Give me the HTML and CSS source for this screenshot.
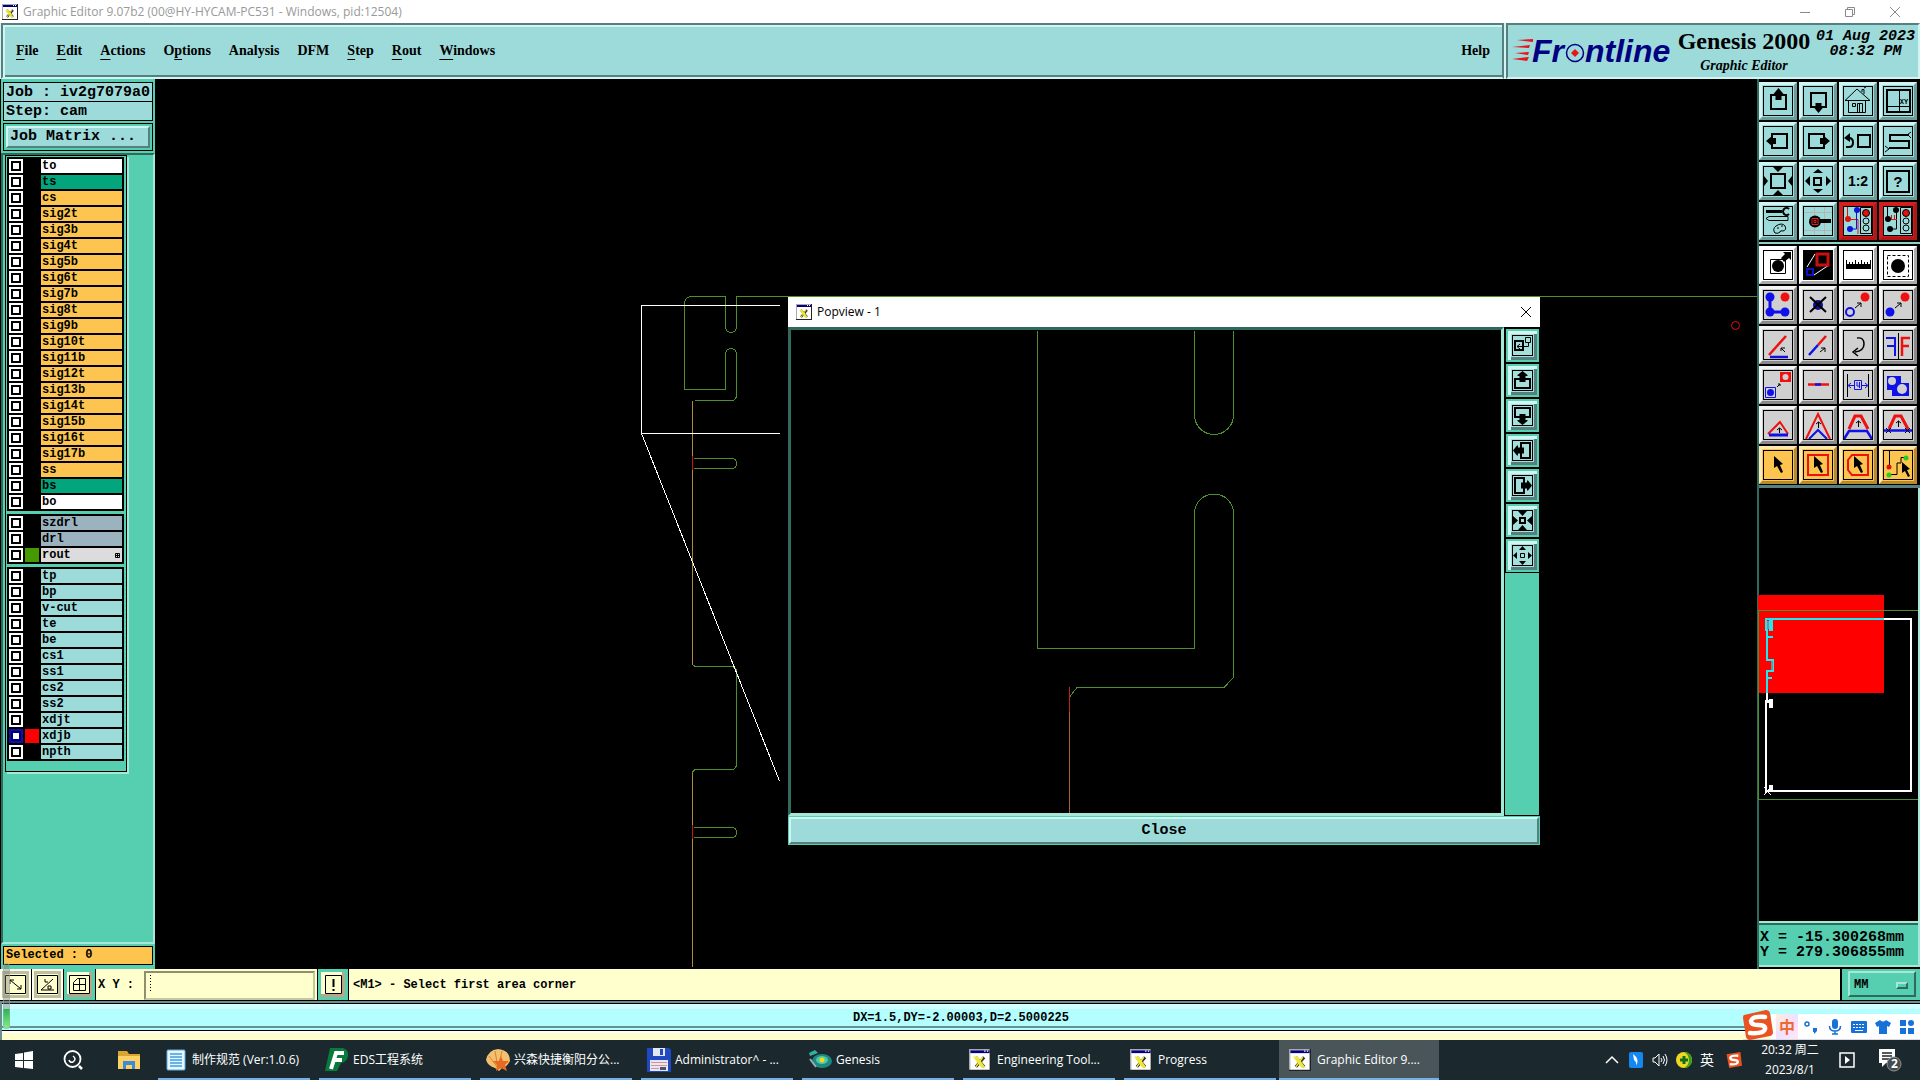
FILE: index.html
```html
<!DOCTYPE html>
<html lang="en">
<head>
<meta charset="utf-8">
<title>Graphic Editor 9.07b2</title>
<link rel="stylesheet" href="styles.css">
</head>
<body>
<svg class="defs" aria-hidden="true">
  <symbol id="i-app" viewBox="0 0 16 16"><path fill="#fff" d="M0 0h16v16H0z"/><path fill="#aaa" d="M0 0h1v16H0zM0 0h16v1H0z"/><path fill="#222" d="M15 0h1v16H0v-1h15z"/><path fill="#000080" d="M1 1h14v2H1z"/><path fill="#fff" d="M11 1h1v1h-1zM13 1h1v1h-1z"/><path d="M5 6l6 7M11 6l-6 7" stroke="#333" stroke-width="2.2"/><path d="M4 6h2l5 7h-2zM10 6l-5 7" stroke="#f0e832" stroke-width="1" fill="#f0e832"/></symbol>
  <symbol id="i-up" viewBox="0 0 30 30"><path class="l2" d="M8 9h15v14H8z"/><path d="M15.500 2l5 6h-2v6h-6V8h-2z"/></symbol>
  <symbol id="i-down" viewBox="0 0 30 30"><path class="l2" d="M8 7h15v14H8z"/><path d="M15.500 27l5-6h-2v-4h-6v4h-2z"/></symbol>
  <symbol id="i-left" viewBox="0 0 30 30"><path class="l2" d="M9 8h15v14H9z"/><path d="M3 15l6-5v2h4v6H9v2z"/></symbol>
  <symbol id="i-right" viewBox="0 0 30 30"><path class="l2" d="M6 8h15v14H6z"/><path d="M27 15l-6-5v2h-4v6h4v2z"/></symbol>
  <symbol id="p-up" viewBox="0 0 21 21"><path class="l2" d="M3 9h15v9H3z"/><path d="M10.500 1l5 4v1h-2v6h-6V6h-2V5z"/></symbol>
  <symbol id="p-down" viewBox="0 0 21 21"><path class="l2" d="M3 3h15v9H3z"/><path d="M10.500 20l5-4v-1h-2V9h-6v6h-2v1z"/></symbol>
  <symbol id="p-left" viewBox="0 0 21 21"><path class="l2" d="M9 3h9v15H9z"/><path d="M1 10.500l4-5h1v2h6v6H6v2H5z"/></symbol>
  <symbol id="p-right" viewBox="0 0 21 21"><path class="l2" d="M3 3h9v15H3z"/><path d="M20 10.500l-4-5h-1v2H9v6h6v2h1z"/></symbol>
  <symbol id="p-in" viewBox="0 0 21 21"><path class="l2" d="M8 8h5v5H8z"/><path d="M6 1h9l-4.500 5zM6 20h9l-4.500-5zM1 6v9l5-4.500zM20 6v9l-5-4.500z"/></symbol>
  <symbol id="p-out" viewBox="0 0 21 21"><path class="l1" d="M8.500 8.500h4v4h-4z"/><path d="M7 5h7l-3.500-4zM7 16h7l-3.500 4zM5 7v7l-4-3.500zM16 7v7l4-3.500z"/></symbol>
  <symbol id="i-in" viewBox="0 0 30 30"><path class="l2" d="M8 8h14v14H8z"/><path d="M10 1h10l-5 5zM10 29h10l-5-5zM1 10v10l4-5zM29 10v10l-4-5z"/></symbol>
  <symbol id="i-out" viewBox="0 0 30 30"><path class="l2" d="M11 12h7v7h-7z"/><path d="M10 7h10l-5-4zM10 23h10l-5 4zM7 10v10l-5-5zM23 10v10l5-5z"/></symbol>
</svg>

<header class="titlebar">
  <svg class="app-icon"><use href="#i-app"/></svg>
  <span class="title-text">Graphic Editor 9.07b2 (00@HY-HYCAM-PC531 - Windows, pid:12504)</span>
  <button class="win-btn" aria-label="Minimize"><svg viewBox="0 0 12 12"><path d="M1 6.500h10"/></svg></button>
  <button class="win-btn" aria-label="Restore"><svg viewBox="0 0 12 12"><path d="M1.500 3.500h7v7h-7zM3.500 3V1.500h7v7H9"/></svg></button>
  <button class="win-btn" aria-label="Close window"><svg viewBox="0 0 12 12"><path d="M1 1l10 10M11 1L1 11"/></svg></button>
</header>

<div class="topbar">
  <nav class="menu">
    <button><u>F</u>ile</button><button><u>E</u>dit</button><button><u>A</u>ctions</button><button>O<u>p</u>tions</button><button>Analysis</button><button>DFM</button><button><u>S</u>tep</button><button><u>R</u>out</button><button><u>W</u>indows</button>
    <button class="help">Help</button>
  </nav>
  <div class="brand">
    <svg class="logo" viewBox="0 0 160 40" role="img" aria-label="Frontline">
      <path fill="#e8141c" d="M5 9l16-1v3zM0 16l18-2-1 3zM3 22l14-1-1 3zM0 28l17-2-2 4z"/>
      <g class="logo-text"><text x="20" y="31">Fr</text><text x="73" y="31">ntline</text></g>
      <circle cx="63" cy="22" r="8.500" fill="none" stroke="#000080" stroke-width="1.500"/><path fill="#e8141c" d="M63 18l4 4-4 4-4-4z"/>
    </svg>
    <div class="product"><strong>Genesis 2000</strong><em>Graphic Editor</em></div>
    <div class="date">01 Aug 2023<br>08:32 PM</div>
  </div>
</div>

<main class="work">
  <aside class="side">
    <div class="job">Job : iv2g7079a0</div>
    <div class="job step">Step: cam</div>
    <div class="matrix"><button>Job Matrix ...</button></div>
    <div class="layers-pane">
      <div class="layers">
        <ul>
          <li><input type="checkbox" id="l1"><i></i><label for="l1" class="white">to</label></li>
          <li><input type="checkbox" id="l2"><i></i><label for="l2" class="green">ts</label></li>
          <li><input type="checkbox" id="l3"><i></i><label for="l3" class="gold">cs</label></li>
          <li><input type="checkbox" id="l4"><i></i><label for="l4" class="gold">sig2t</label></li>
          <li><input type="checkbox" id="l5"><i></i><label for="l5" class="gold">sig3b</label></li>
          <li><input type="checkbox" id="l6"><i></i><label for="l6" class="gold">sig4t</label></li>
          <li><input type="checkbox" id="l7"><i></i><label for="l7" class="gold">sig5b</label></li>
          <li><input type="checkbox" id="l8"><i></i><label for="l8" class="gold">sig6t</label></li>
          <li><input type="checkbox" id="l9"><i></i><label for="l9" class="gold">sig7b</label></li>
          <li><input type="checkbox" id="l10"><i></i><label for="l10" class="gold">sig8t</label></li>
          <li><input type="checkbox" id="l11"><i></i><label for="l11" class="gold">sig9b</label></li>
          <li><input type="checkbox" id="l12"><i></i><label for="l12" class="gold">sig10t</label></li>
          <li><input type="checkbox" id="l13"><i></i><label for="l13" class="gold">sig11b</label></li>
          <li><input type="checkbox" id="l14"><i></i><label for="l14" class="gold">sig12t</label></li>
          <li><input type="checkbox" id="l15"><i></i><label for="l15" class="gold">sig13b</label></li>
          <li><input type="checkbox" id="l16"><i></i><label for="l16" class="gold">sig14t</label></li>
          <li><input type="checkbox" id="l17"><i></i><label for="l17" class="gold">sig15b</label></li>
          <li><input type="checkbox" id="l18"><i></i><label for="l18" class="gold">sig16t</label></li>
          <li><input type="checkbox" id="l19"><i></i><label for="l19" class="gold">sig17b</label></li>
          <li><input type="checkbox" id="l20"><i></i><label for="l20" class="gold">ss</label></li>
          <li><input type="checkbox" id="l21"><i></i><label for="l21" class="green">bs</label></li>
          <li><input type="checkbox" id="l22"><i></i><label for="l22" class="white">bo</label></li>
        </ul>
        <ul>
          <li><input type="checkbox" id="l23"><i></i><label for="l23" class="steel">szdrl</label></li>
          <li><input type="checkbox" id="l24"><i></i><label for="l24" class="steel">drl</label></li>
          <li><input type="checkbox" id="l25"><i class="c-rout"></i><label for="l25" class="grey">rout<svg viewBox="0 0 5 5"><path d="M.5.5h4v4h-4zM2.500 0v5M0 2.500h5"/></svg></label></li>
        </ul>
        <ul>
          <li><input type="checkbox" id="l26"><i></i><label for="l26">tp</label></li>
          <li><input type="checkbox" id="l27"><i></i><label for="l27">bp</label></li>
          <li><input type="checkbox" id="l28"><i></i><label for="l28">v-cut</label></li>
          <li><input type="checkbox" id="l29"><i></i><label for="l29">te</label></li>
          <li><input type="checkbox" id="l30"><i></i><label for="l30">be</label></li>
          <li><input type="checkbox" id="l31"><i></i><label for="l31">cs1</label></li>
          <li><input type="checkbox" id="l32"><i></i><label for="l32">ss1</label></li>
          <li><input type="checkbox" id="l33"><i></i><label for="l33">cs2</label></li>
          <li><input type="checkbox" id="l34"><i></i><label for="l34">ss2</label></li>
          <li><input type="checkbox" id="l35"><i></i><label for="l35">xdjt</label></li>
          <li><input type="checkbox" id="l36" checked><i class="c-xdjb"></i><label for="l36">xdjb</label></li>
          <li><input type="checkbox" id="l37"><i></i><label for="l37">npth</label></li>
        </ul>
      </div>
    </div>
    <div class="selected">Selected : 0</div>
  </aside>

  <section class="canvas">
    <svg class="drawing">
      <g transform="translate(-155 -79)" fill="none" shape-rendering="crispEdges">
        <g stroke="#4f8f2c">
          <path d="M1757 296.500H736.500V327a5 5 0 0 1-11 0V296.500H691a7 7 0 0 0-6.500 8V389.500H725.500V354a5 5 0 0 1 11 0V397l-3 3.500H695"/>
          <path d="M694 458.500H732a5 5 0 0 1 0 10H694M692 664l3 2.500H733l3.500 3V766l-3 3.500H695l-3 3M694 827.500H732a5 5 0 0 1 0 10H694"/>
        </g>
        <path stroke="#b08a3c" d="M692.500 401V665M692.500 773V967"/>
        <path stroke="#c81414" d="M692.500 456V470M692.500 825V839"/>
        <path stroke="#fff" d="M780 305.500H641.500V433.500H780M641.500 433.500L779.500 781"/>
        <circle cx="1735.500" cy="325.500" r="4" stroke="#e01010" shape-rendering="auto"/>
      </g>
    </svg>

    <div class="popup" role="dialog" aria-label="Popview - 1">
      <div class="popup-title"><svg class="app-icon"><use href="#i-app"/></svg><span>Popview - 1</span>
        <button aria-label="Close popup"><svg viewBox="0 0 12 12"><path d="M1 1l10 10M11 1L1 11"/></svg></button></div>
      <div class="popup-body">
        <div class="popview">
          <svg class="drawing"><g transform="translate(-791 -330)" fill="none" shape-rendering="crispEdges">
            <path stroke="#4f8f2c" d="M1037.500 331V648.500H1194.500V513.500a19 19 0 0 1 39 0V677.500L1224 687.500H1077L1069.500 697M1194.500 331V415a19 19 0 0 0 39 0V331"/>
            <path stroke="#a8603a" d="M1069.500 697V813"/><path stroke="#c02020" d="M1069.500 687V712"/></g></svg>
        </div>
        <div class="pop-tools">
          <button class="ptool" aria-label="Popup window"><svg viewBox="0 0 21 21"><path class="l2" d="M3 6h8v9H3z"/><path class="l1" d="M13.500 2.500h5v5h-5zM16.500 8v3.500H5M8 9l-3 2.500L8 14"/></svg></button>
          <button class="ptool" aria-label="Pan up"><svg><use href="#p-up"/></svg></button>
          <button class="ptool" aria-label="Pan down"><svg><use href="#p-down"/></svg></button>
          <button class="ptool" aria-label="Pan left"><svg><use href="#p-left"/></svg></button>
          <button class="ptool" aria-label="Pan right"><svg><use href="#p-right"/></svg></button>
          <button class="ptool" aria-label="Zoom in"><svg><use href="#p-in"/></svg></button>
          <button class="ptool" aria-label="Zoom out"><svg><use href="#p-out"/></svg></button>
        </div>
      </div>
      <button class="popup-close">Close</button>
    </div>
  </section>

  <aside class="right">
    <div class="tools">
      <button class="tool" aria-label="Pan up"><svg><use href="#i-up"/></svg></button>
      <button class="tool" aria-label="Pan down"><svg><use href="#i-down"/></svg></button>
      <button class="tool" aria-label="Home"><svg viewBox="0 0 30 30"><path class="l1" d="M2 14.500L14 3l13 11.500zM5.500 15v11.500h17V15M9.500 17.500h3v3h-3zM14.500 26V17.500h5V26M16.500 18v8M19 6V3.500h2V8M21 2l2-1"/></svg></button>
      <button class="tool" aria-label="Zoom X Y"><svg viewBox="0 0 30 30"><path class="l2" d="M4 4h23v22H4z"/><path class="l1" d="M4 20.500h23M16.500 4v22"/><text class="tiny" x="21" y="18">XY</text></svg></button>
      <button class="tool" aria-label="Pan left"><svg><use href="#i-left"/></svg></button>
      <button class="tool" aria-label="Pan right"><svg><use href="#i-right"/></svg></button>
      <button class="tool" aria-label="Previous view"><svg viewBox="0 0 30 30"><path class="l2" d="M15 9h12v12H15zM3 21h3q4 0 4-4.500T6 12H5"/><path d="M1 12l6-5v9z"/></svg></button>
      <button class="tool" aria-label="Snake"><svg viewBox="0 0 30 30"><path class="l2" d="M26 9H7v6h19v7H6"/><path class="l1" d="M24 9l4-3M25 9l3 3M2 20l4 3-4 3"/></svg></button>
      <button class="tool" aria-label="Zoom in"><svg><use href="#i-in"/></svg></button>
      <button class="tool" aria-label="Zoom out"><svg><use href="#i-out"/></svg></button>
      <button class="tool" aria-label="Scale one to two"><svg viewBox="0 0 30 30"><text class="ratio" x="15" y="20">1:2</text></svg></button>
      <button class="tool" aria-label="Query"><svg viewBox="0 0 30 30"><path class="l2" d="M4 5h22v21H4z"/><text x="15" y="21">?</text></svg></button>
      <button class="tool" aria-label="Settings"><svg viewBox="0 0 30 30"><path d="M3 4h16v3H3z"/><path class="l2" d="M26 3a3.500 3.500 0 1 0 0 5"/><path class="l1" d="M3 12.500l3-2h19v4H6zM12 27q-3-4 1-7 6-4 9 0 2 4-2 5-3-1-3 1-2 2-5 1zM14 22h2M18 20h2"/></svg></button>
      <button class="tool" aria-label="Snap"><svg viewBox="0 0 30 30"><path stroke="#b9b3b3" d="M11.500 1v28M21.500 1v28M1 6.500h28M1 24.500h28"/><path stroke="#000" d="M17 15h11" stroke-width="4"/><circle cx="12" cy="15.500" r="6"/><path stroke="#e02020" fill="none" d="M9 12.500h6v6H9zM11 14.500h2v2h-2z"/></svg></button>
      <button class="tool red" aria-label="Net colour"><svg viewBox="0 0 30 30"><path stroke="#e01010" fill="none" d="M4.500 1v12M5 13.500h10V28"/><path stroke="#1010e0" fill="none" d="M13.500 4v10M8 23h5.500V14"/><circle cx="5" cy="13" r="3" fill="#e01010"/><circle cx="14" cy="4" r="3" fill="#1010e0"/><circle cx="7" cy="23" r="3" fill="#1010e0"/><path class="l1" d="M17.500 1.500h11v26h-11z"/><circle cx="23" cy="7" r="3.500" fill="#e01010" stroke="#000"/><circle class="l1" cx="23" cy="15" r="3"/><circle class="l1" cx="23" cy="22" r="3"/></svg></button>
      <button class="tool red" aria-label="Net state"><svg viewBox="0 0 30 30"><path class="l1" d="M4.500 1v12M13.500 4v10M8 23h5.500V14"/><path stroke="#e01010" fill="none" d="M6 13.500h8M8.500 9v4M11.500 9v4"/><circle cx="5" cy="13" r="3"/><circle cx="13" cy="4" r="3"/><circle cx="7" cy="23" r="3"/><path class="l1" d="M17.500 1.500h11v26h-11z"/><circle cx="23" cy="7" r="3.500" fill="#e01010" stroke="#000"/><circle class="l1" cx="23" cy="15" r="3"/><circle class="l1" cx="23" cy="22" r="3"/></svg></button>
    </div>
    <div class="tools second">
      <button class="tool white" aria-label="Select feature"><svg viewBox="0 0 30 30"><path class="l1" d="M7.500 9.500h15v14h-15z"/><circle cx="15" cy="16" r="6"/><path d="M18 8l4-4-2-2h8v8l-2-2-5 4z"/></svg></button>
      <button class="tool white" aria-label="Popview"><svg viewBox="0 0 30 30"><path d="M1 1h28v28H1z"/><path stroke="#fff" d="M12 4L4 17M26 15L11 25"/><path stroke="#c81010" stroke-width="3" d="M14 4h11v11H14z" /><path stroke="#1010c8" stroke-width="2" d="M4 19h6v6H4z"/></svg></button>
      <button class="tool white" aria-label="Measure"><svg viewBox="0 0 30 30"><path d="M3 14h25v5H3zM3 10h1v5H3zM6 12h1v3H6zM9 12h1v3H9zM12 10h1v5h-1zM15 12h1v3h-1zM18 10h1v5h-1zM21 12h1v3h-1zM24 12h1v3h-1zM27 10h1v5h-1z"/></svg></button>
      <button class="tool white" aria-label="Area"><svg viewBox="0 0 30 30"><path class="l1" stroke-dasharray="3 2" d="M4.500 5.500h21v21h-21z"/><circle cx="15" cy="16" r="7"/></svg></button>
      <button class="tool grey" aria-label="Chain"><svg viewBox="0 0 30 30"><path stroke="#1010e8" stroke-width="3" fill="none" d="M7 7v15h15"/><g fill="#1010e8"><circle cx="7" cy="7" r="4.500"/><circle cx="7" cy="22" r="4.500"/><circle cx="22" cy="22" r="4.500"/></g><circle cx="22" cy="7" r="4.500" fill="#f01010"/></svg></button>
      <button class="tool grey" aria-label="Delete"><svg viewBox="0 0 30 30"><circle cx="15" cy="15" r="5" fill="#101090"/><path class="l2" d="M7 7l16 15M23 7L7 22"/></svg></button>
      <button class="tool grey" aria-label="Move"><svg viewBox="0 0 30 30"><circle cx="7" cy="22" r="4" fill="none" stroke="#1010e8" stroke-width="2"/><circle cx="22" cy="7" r="4.500" fill="#f01010"/><path class="l1" d="M12 18l6-5M14 13h4v4"/></svg></button>
      <button class="tool grey" aria-label="Copy"><svg viewBox="0 0 30 30"><circle cx="7" cy="22" r="4.500" fill="#1010e8"/><circle cx="22" cy="7" r="4.500" fill="#f01010"/><path class="l1" d="M12 18l6-5M14 13h4v4"/></svg></button>
      <button class="tool grey" aria-label="Angle"><svg viewBox="0 0 30 30"><path stroke="#f01010" stroke-width="2.500" d="M6 25L23 6"/><path stroke="#1010e8" stroke-width="2.500" d="M7 27h18"/><path class="l1" d="M22 22l-4-4M18 21v-3h4"/></svg></button>
      <button class="tool grey" aria-label="Line"><svg viewBox="0 0 30 30"><path stroke="#f01010" stroke-width="2.500" d="M15 15l8-9"/><path stroke="#1010e8" stroke-width="2.500" d="M6 25l9-10"/><path class="l1" d="M17 22l5-4M18 18h4v4"/></svg></button>
      <button class="tool grey" aria-label="Rotate"><svg viewBox="0 0 30 30"><path fill="none" stroke="#000" stroke-width="1.500" d="M14 8q7-1 7 6t-9 8M15 18l-5 4 5 4"/></svg></button>
      <button class="tool grey" aria-label="Mirror"><svg viewBox="0 0 30 30"><path stroke="#1010e8" stroke-width="2" fill="none" d="M3 8h9v18M4 16h8"/><path stroke="#f01010" stroke-width="2.500" fill="none" d="M27 8h-8v18M26 16h-7"/><path class="l1" d="M15.500 3v26"/></svg></button>
      <button class="tool grey" aria-label="Swap"><svg viewBox="0 0 30 30"><path fill="#f01010" d="M17 2h11v10H17z"/><circle cx="22.500" cy="7" r="3" fill="#d0d0d0"/><path fill="none" stroke="#1010e8" d="M2.500 17.500h10v10h-10z"/><circle cx="7.500" cy="22.500" r="3.500" fill="#1010e8"/><path class="l1" d="M14 17l3-3M15 14h2v2"/></svg></button>
      <button class="tool grey" aria-label="Trim"><svg viewBox="0 0 30 30"><path stroke="#f01010" stroke-width="2.500" d="M5 14.500h21"/><path stroke="#1010e8" stroke-width="2.500" d="M12 14.500h6"/></svg></button>
      <button class="tool grey" aria-label="Spacing"><svg viewBox="0 0 30 30"><path class="l1" d="M4.500 4v23M25.500 4v23"/><path fill="none" stroke="#1010e8" d="M11.500 10.500h7v9h-7zM11 15.500H6M8 13l-3 2.500L8 18M19 15.500h5M22 13l3 2.500-3 2.500M14 12v4h3M16.500 12v6"/></svg></button>
      <button class="tool grey" aria-label="Cut out"><svg viewBox="0 0 30 30"><path fill="#1010e8" d="M4 6h14v7h8v13H9v-6H4z"/><circle cx="9" cy="11" r="4" fill="#d0d0d0"/><circle cx="19" cy="19" r="5" fill="#d0d0d0"/></svg></button>
      <button class="tool grey" aria-label="Triangle"><svg viewBox="0 0 30 30"><path fill="none" stroke="#f01010" stroke-width="2" d="M5 24L17 12l8 12"/><path stroke="#1010e8" stroke-width="3" d="M6 25h19"/><path class="l1" d="M16.500 23v-5M14 20l2.500-2 2.500 2"/></svg></button>
      <button class="tool grey" aria-label="Peak"><svg viewBox="0 0 30 30"><path fill="none" stroke="#f01010" stroke-width="2" d="M3 29L15 4l12 25"/><path fill="none" stroke="#1010e8" stroke-width="2" d="M6 29l9-9 9 9"/><path class="l1" d="M15.500 18v-6M13 14l2.500-2 2.500 2"/></svg></button>
      <button class="tool grey" aria-label="Trapezoid"><svg viewBox="0 0 30 30"><path fill="none" stroke="#f01010" stroke-width="3" d="M6 19l6-13h6l7 13"/><path fill="none" stroke="#1010e8" stroke-width="2.500" d="M1 29l5-8h18l5 8"/><path class="l1" d="M15.500 17v-6M13 13l2.500-2 2.500 2"/></svg></button>
      <button class="tool grey" aria-label="Trim trapezoid"><svg viewBox="0 0 30 30"><path fill="none" stroke="#f01010" stroke-width="3" d="M6 19l6-13h6l7 13"/><path stroke="#1010e8" stroke-width="2.500" d="M1 20.500h28"/><path class="l1" d="M15.500 17v-6M13 13l2.500-2 2.500 2M3 18l5 5M8 18l-5 5M22 18l5 5M27 18l-5 5"/></svg></button>
      <button class="tool gold" aria-label="Pick"><svg viewBox="0 0 30 30"><path d="M11 6l9 8-3 1 3 7-2 1-4-7-3 2z"/></svg></button>
      <button class="tool gold" aria-label="Pick in frame"><svg viewBox="0 0 30 30"><path fill="none" stroke="#f01010" stroke-width="2" d="M5 5h20v20H5z"/><path d="M11 6l9 8-3 1 3 7-2 1-4-7-3 2z"/></svg></button>
      <button class="tool gold" aria-label="Pick in polygon"><svg viewBox="0 0 30 30"><path fill="none" stroke="#f01010" stroke-width="2" d="M9 5h16v20H9l-4-5V10z"/><path d="M11 6l9 8-3 1 3 7-2 1-4-7-3 2z"/></svg></button>
      <button class="tool gold" aria-label="Pick net"><svg viewBox="0 0 30 30"><path class="l1" d="M6.500 1v16M6 24.500h8V13h4V7.500h6"/><circle cx="6" cy="17" r="2.500" fill="#e01010"/><circle cx="6" cy="25" r="2.500" fill="#20d020"/><circle cx="23" cy="8" r="2.500" fill="#20d020"/><path d="M19 12l8 7-3 1 3 6-2 1-3-6-3 2z"/></svg></button>
    </div>
    <div class="minimap">
      <svg class="drawing"><g transform="translate(-1757 -488)" fill="none" shape-rendering="crispEdges">
        <path fill="#f00" d="M1758 595h126v98h-126z"/>
        <path stroke="#4f8f2c" d="M1919 610.500H1758.500V799.500H1919"/>
        <path stroke="#fff" stroke-width="2" d="M1883 619h28v172h-145V701h1V692"/>
        <path stroke="#20e8f0" stroke-width="2" d="M1884 619H1766V630H1767V660H1773V671H1767V693M1767 637h6M1767 678h5"/>
        <path stroke="#20e8f0" stroke-width="4" d="M1771 619v12"/>
        <path stroke="#889" stroke-width="2" d="M1768 621v8M1772 661v9"/>
        <path fill="#fff" d="M1766 700h3v-1h4v9h-4v-5h-3zM1769 785h4v5h-4z"/>
        <path stroke="#fff" d="M1764 795l7-8M1764 787l7 8"/>
      </g></svg>
    </div>
    <div class="coords">X = -15.300268mm<br>Y = 279.306855mm</div>
  </aside>
</main>

<div class="command">
  <button class="cmd" aria-label="Relative"><svg viewBox="0 0 21 19"><path d="M.5.5h20v18H.5zM5 5l11 9M5 9V5h4M16 10v4h-4"/></svg></button>
  <button class="cmd" aria-label="Polar"><svg viewBox="0 0 21 19"><path d="M.5.5h20v18H.5zM16 4L4 15h13M8 4v3h3M11 11h3v3h-3z"/></svg></button>
  <button class="cmd on" aria-label="Grid"><svg viewBox="0 0 21 19"><path d="M.5.5h20v18H.5zM4.500 7.500l4-4h8v12h-12zM10.500 3v13M4 9.500h13"/></svg></button>
  <label class="xy" for="xy">X Y :</label>
  <input type="text" id="xy">
  <button class="cmd on bang" aria-label="Alert"><svg viewBox="0 0 17 19"><path d="M.5.5h16v18H.5z"/><path stroke-width="2" d="M8.500 4v8M8.500 14v2"/></svg></button>
  <p>&lt;M1&gt; - Select first area corner</p>
  <div class="unit"><button>MM<i></i></button></div>
</div>

<div class="status">
  <output>DX=1.5,DY=-2.00003,D=2.5000225</output>
  <i class="gauge"></i>
  <div class="ime">
    <svg class="sogou" viewBox="0 0 30 30"><path fill="#ea5320" d="M1 5l22-5q3 0 4 3l3 19q0 3-3 4L7 30q-3 0-4-3L0 8q0-3 1-3z"/><path fill="none" stroke="#fff" stroke-width="4.500" stroke-linecap="round" d="M22 7Q9 6 8 11q0 4 7 4 8 0 7 4-1 5-15 4"/></svg>
    <b>中</b>
    <svg viewBox="0 0 16 16"><circle cx="4" cy="5" r="2" fill="none" stroke="#1672d8" stroke-width="1.500"/><path fill="#1672d8" d="M10 9h4v3l-3 3v-2h-1z"/></svg>
    <svg viewBox="0 0 16 16"><rect x="5" y="0" width="6" height="10" rx="3" fill="#1672d8"/><path fill="none" stroke="#1672d8" stroke-width="1.500" d="M2.500 7q0 5 5.500 5t5.500-5M8 12v3M5 15h6"/></svg>
    <svg viewBox="0 0 16 16"><rect x="0" y="2" width="16" height="12" rx="1" fill="#1672d8"/><path stroke="#fff" stroke-dasharray="2 1" d="M2 5.500h12M2 8.500h12"/><path stroke="#fff" d="M4 11.500h8"/></svg>
    <svg viewBox="0 0 16 16"><path fill="#1672d8" d="M5 1q3 3 6 0l5 3-2 4-2-1v8H4V7L2 8 0 4z"/></svg>
    <svg viewBox="0 0 16 16"><path fill="#1672d8" d="M1 1h6v6H1zM1 9h6v6H1zM9 9h6v6H9z"/><circle cx="12" cy="4" r="3" fill="#1672d8"/></svg>
  </div>
</div>

<footer class="taskbar">
  <button class="sys" aria-label="Start"><svg viewBox="0 0 18 18"><path fill="#fff" d="M0 3l8-1v7H0zM9 1.500L18 0v9H9zM0 10h8v7l-8-1zM9 10h9v8l-9-1z"/></svg></button>
  <button class="sys search" aria-label="Search"><svg viewBox="0 0 20 20"><circle cx="9.500" cy="9" r="8" fill="none" stroke="#fff" stroke-width="1.800"/><path fill="none" stroke="#fff" stroke-width="1.500" d="M10 6q4 3 0 6-3 1-4-2"/><path stroke="#fff" stroke-width="2.500" d="M16 16l3 3"/></svg></button>
  <button class="sys folder" aria-label="File Explorer"><svg viewBox="0 0 22 18"><path fill="#dca530" d="M0 0h9l2 3h11v4H0z"/><path fill="#fcd264" d="M0 5h22v13H0z"/><path fill="#3c8ad8" d="M5 10h12v8h-3v-4H8v4H5z"/></svg></button>
  <button class="task"><svg viewBox="0 0 24 24"><rect x="3" y="2" width="18" height="20" rx="1" fill="#e8f6ff" stroke="#58b0e8"/><path stroke="#3c9ee0" stroke-width="1.500" d="M6 6h12M6 9h12M6 12h12M6 15h12M6 18h12"/></svg>制作规范 (Ver:1.0.6)</button>
  <button class="task"><svg viewBox="0 0 24 24"><path fill="#0a7a3c" d="M5 0h13q6 2 5 8-1 6-7 7l-4 8H0z"/><path fill="none" stroke="#fff" stroke-width="4" d="M19 5H11L6 21M9 12h8"/></svg>EDS工程系统</button>
  <button class="task"><svg viewBox="0 0 24 24"><path fill="#f4c070" d="M12 1q12 1 12 12-4 7-8 7l-3 3-4-3Q2 18 0 12 2 2 12 1z"/><path stroke="#d08830" d="M12 20L3 8M12 20L9 3M12 20l4-17"/><path fill="#e86a20" d="M15 8l2 5 6 0-4 4 2 6-6-3-5 3 1-6-4-4h6z"/></svg>兴森快捷衡阳分公...</button>
  <button class="task"><svg viewBox="0 0 24 24"><path fill="#2048c0" d="M0 0h22l2 2v22H0z"/><path fill="#e4e8f4" d="M6 0h12v8H6zM3 12h18v11H3z"/><path fill="#2048c0" d="M13 1h3v6h-3z"/><path stroke="#e09090" d="M4 14.500h16M4 17.500h16M4 20.500h8"/><path fill="#555" d="M13 19h6v3h-6z"/></svg>Administrator^ - ...</button>
  <button class="task"><svg viewBox="0 0 24 24"><ellipse cx="14" cy="13" rx="10" ry="7" fill="#1c8a80"/><ellipse cx="14" cy="12" rx="6" ry="4" fill="#50c8a8"/><circle cx="14" cy="12" r="2.500" fill="#f0d820"/><path fill="#30b0a0" d="M1 5l6-3 3 3-8 3z"/><path stroke="#9ab" stroke-width="2" d="M2 11l6 8"/></svg>Genesis</button>
  <button class="task"><svg class="app"><use href="#i-app"/></svg>Engineering Tool...</button>
  <button class="task"><svg class="app"><use href="#i-app"/></svg>Progress</button>
  <button class="task active"><svg class="app"><use href="#i-app"/></svg>Graphic Editor 9....</button>
  <div class="tray">
    <svg viewBox="0 0 16 16"><path fill="none" stroke="#fff" stroke-width="1.500" d="M2 11l6-6 6 6"/></svg>
    <svg viewBox="0 0 16 16"><rect x="1" width="14" height="16" rx="2" fill="#1488f0"/><path fill="#fff" d="M5 2q7 5 3 12Q9 10 6 8z"/></svg>
    <svg viewBox="0 0 16 16"><path fill="none" stroke="#fff" d="M1 6h2l4-4v12l-4-4H1zM9 6q2 2 0 4M11 4q3 4 0 8M13 2q4 6 0 12"/></svg>
    <svg viewBox="0 0 16 16"><circle cx="8" cy="8" r="8" fill="#f0d820"/><path fill="#38a020" d="M8 0a8 8 0 0 1 0 16 9 9 0 0 0 0-16z"/><path stroke="#156a20" stroke-width="3" d="M8 4v8M4 8h8"/></svg>
    <span>英</span>
    <svg class="s" viewBox="0 0 30 30"><path fill="#ea5320" d="M1 4l26-4 3 26-24 4z"/><path fill="none" stroke="#fff" stroke-width="4.500" d="M23 7Q9 6 8 11q0 4 7 4 8 0 7 4-1 5-15 4"/></svg>
    <time>20:32 周二<br>2023/8/1</time>
    <svg class="play" viewBox="0 0 16 16"><path fill="none" stroke="#fff" stroke-width="1.500" d="M1 1h14v14H1z"/><path fill="#fff" d="M6 4l5 4-5 4z"/></svg>
    <svg class="note" viewBox="0 0 24 24"><path fill="#fff" d="M1 1h16v14H8l-4 4v-4H1z"/><path stroke="#1b292e" stroke-width="1.500" d="M4 5h10M4 8h10M4 11h7"/><circle cx="16" cy="16" r="7" fill="#444c50" stroke="#8a9296"/><text x="13" y="20" font-size="12" font-weight="bold" fill="#fff">2</text></svg>
  </div>
</footer>
</body>
</html>
```
FILE: styles.css
```css
:root {
  --teal: #56cfb0;
  --cyan: #9ddbdb;
  --light: #d2f4f2;
  --dark: #55807f;
  --deep: #2f6a5c;
  --gold: #fdc54f;
  --cream: #ffffce;
  --mono: "Liberation Mono", monospace;
  --ui: "Open Sans", "Noto Sans CJK SC", sans-serif;
}
* { box-sizing: border-box; }
body {
  margin: 0;
  height: 100vh;
  display: flex;
  flex-direction: column;
  background: #000;
  color: #000;
  font: bold 12px/14px var(--mono);
  overflow: hidden;
}
button { font: inherit; color: inherit; border: 0; padding: 0; margin: 0; background: none; }
svg { display: block; }
.defs { position: absolute; width: 0; height: 0; }
.l1 { fill: none; stroke: #000; stroke-width: 1; }
.l2 { fill: none; stroke: #000; stroke-width: 2; }

.titlebar {
  flex: none;
  height: 23px;
  display: flex;
  align-items: center;
  background: #fff;
  padding: 0 3px 0 2px;
  font: 12px/20px var(--ui);
}
.app-icon { width: 16px; height: 16px; }
.title-text { flex: 1; padding-left: 5px; color: #999; }
.win-btn { width: 45px; height: 20px; display: flex; justify-content: center; align-items: center; }
.win-btn svg { width: 12px; height: 12px; fill: none; stroke: #8a8a8a; }

.topbar { flex: none; height: 56px; display: flex; gap: 2px; padding-left: 1px; background: var(--light); }
.menu, .brand {
  display: flex;
  align-items: center;
  background: var(--cyan);
  border: 2px solid var(--dark);
  border-bottom-color: var(--light);
}
.menu {
  flex: 1;
  gap: 18px;
  padding: 0 12px 0 13px;
  font: bold 14px/20px "Liberation Serif", serif;
  border-right-color: var(--dark);
  box-shadow: inset 2px 2px var(--light), inset 0 -2px var(--dark);
}
.menu u { text-underline-offset: 4px; }
.help { margin-left: auto; }
.brand { width: 414px; padding: 0 3px 0 4px; border-right-color: var(--light); align-items: flex-start; }
.logo { width: 160px; height: 40px; margin-top: 6px; overflow: visible; }
.logo-text { font: italic bold 32px "Liberation Sans", sans-serif; fill: #000080; }
.product { flex: 1; text-align: center; font: bold 14px/18px "Liberation Serif", serif; }
.product strong { display: block; font-size: 24px; line-height: 32px; }
.date { padding-top: 4px; text-align: center; font: italic bold 15px/15px var(--mono); }

.work { flex: 1; min-height: 0; display: flex; }

.side {
  width: 155px;
  display: flex;
  flex-direction: column;
  background: var(--teal);
  border-left: 1px solid #000;
  padding: 3px 0 4px;
}
.job, .selected { margin: 0 2px; border: 1px solid #000; background: var(--cyan); padding-left: 2px; }
.job { height: 20px; font-size: 15px; line-height: 19px; white-space: nowrap; }
.step { height: 19px; border-top: 0; }
.matrix { height: 28px; margin: 2px; border: 1px solid #000; padding: 2px; }
.matrix button {
  width: 100%;
  height: 22px;
  background: var(--cyan);
  border: 2px solid var(--light);
  border-right-color: var(--dark);
  border-bottom-color: var(--dark);
  text-align: left;
  padding-left: 2px;
  font-size: 15px;
  line-height: 18px;
}
.layers-pane {
  flex: 1;
  min-height: 0;
  border: 2px solid var(--deep);
  border-right-color: #a5e8d8;
  border-bottom-color: #a5e8d8;
}
.layers {
  width: 122px;
  height: 617px;
  margin-left: 2px;
  padding: 1px 2px 0 1px;
  border: 1px solid #000;
  box-shadow: 2px 2px #a5e8d8;
}
.layers ul { list-style: none; margin: 0 0 3px; padding: 1px 0; background: #000; }
.layers li {
  height: 16px;
  display: grid;
  grid-template-columns: 14px 14px 1fr;
  gap: 2px;
  padding: 1px 2px;
}
.layers input {
  appearance: none;
  width: 14px;
  height: 14px;
  margin: 0;
  background: #fff;
  box-shadow: inset 0 0 0 2px #fff, inset 0 0 0 4px #000;
}
.layers input:checked { box-shadow: inset 0 0 0 2px #1010a8, inset 0 0 0 4px #000070; }
.layers label { background: var(--cyan); padding-left: 1px; line-height: 14px; display: flex; justify-content: space-between; align-items: center; }
.layers label svg { width: 5px; height: 5px; margin-right: 2px; fill: none; stroke: #000; }
.layers .white { background: #fff; }
.layers .green { background: #03a67c; }
.layers .gold { background: var(--gold); }
.layers .steel { background: #9ab3bf; }
.layers .grey { background: #dcdcdc; }
.c-rout { background: #469a00; }
.c-xdjb { background: #f00; }
.selected { height: 19px; margin-top: 2px; background: var(--gold); line-height: 16px; }

.canvas { flex: 1; position: relative; overflow: hidden; }
.drawing { width: 100%; height: 100%; }

.popup {
  position: absolute;
  left: 633px;
  top: 218px;
  width: 752px;
  height: 548px;
  display: flex;
  flex-direction: column;
  background: var(--teal);
}
.popup-title { height: 30px; display: flex; align-items: center; background: #fff; padding: 0 7px 0 8px; font: 12px/20px var(--ui); }
.popup-title span { flex: 1; padding-left: 5px; }
.popup-title button { width: 14px; height: 20px; display: grid; place-items: center; }
.popup-title button svg { width: 12px; height: 12px; stroke: #000; }
.popup-body { flex: 1; min-height: 0; display: flex; }
.popview { flex: 1; background: #000; border: 3px solid var(--deep); border-right-color: #a5e8d8; border-bottom-color: #a5e8d8; }
.pop-tools { width: 36px; border: 1px solid #000; padding: 1px 0 0 1px; display: flex; flex-direction: column; gap: 2px; background: linear-gradient(#000 245px, var(--teal) 245px); }
.ptool {
  width: 33px;
  height: 33px;
  border: 2px solid var(--teal);
  background: #a5dfdc;
  box-shadow: inset 3px 3px var(--light), inset -3px -3px var(--dark);
  display: grid;
  place-items: center;
}
.ptool svg { width: 21px; height: 21px; outline: 1px solid #000; outline-offset: -1px; }
.popup-close {
  height: 27px;
  margin: 1px;
  background: var(--cyan);
  border: 2px solid var(--light);
  border-right-color: var(--dark);
  border-bottom-color: var(--dark);
  font-size: 15px;
  line-height: 23px;
}

.right { width: 163px; display: flex; flex-direction: column; border-left: 2px solid var(--deep); }
.tools { display: grid; grid-template-columns: repeat(4, 38px); gap: 2px; padding-top: 3px; }
.second { margin-top: 2px; padding: 2px 0 1px; border-top: 2px solid #8fd0c4; border-bottom: 3px solid var(--dark); }
.tool {
  width: 38px;
  height: 38px;
  background: var(--cyan);
  border: 3px solid var(--light);
  border-right-color: #6b9c9c;
  border-bottom-color: #6b9c9c;
  display: grid;
  place-items: center;
}
.tool svg { width: 30px; height: 30px; outline: 1px solid #000; outline-offset: -1px; }
.tool text { font: bold 15px var(--mono); text-anchor: middle; }
.tool .tiny { font-size: 7px; }
.tool .ratio { font: bold 14px "Liberation Sans", sans-serif; }
.tool.red { box-shadow: inset 0 0 0 2px #d81818; border-color: #d02020 #b01818 #b01818 #d02020; }
.tool.white { background: #fff; border-color: #fff #aaa #aaa #fff; }
.tool.grey { background: #d0d0d0; border-color: #f4f4f4 #8a8a8a #8a8a8a #f4f4f4; }
.tool.gold { background: var(--gold); border-color: #ffe9b0 #b88a30 #b88a30 #ffe9b0; }
.minimap { flex: 1; min-height: 0; border-right: 2px solid #a5e8d8; }
.minimap .drawing { margin-left: -2px; width: calc(100% + 2px); overflow: hidden; }
.coords {
  height: 46px;
  margin-bottom: 2px;
  padding: 7px 1px 0;
  background: var(--teal);
  border: 2px solid #a5e8d8;
  border-left: 0;
  font-size: 15px;
  line-height: 15px;
  white-space: nowrap;
  box-shadow: inset 0 2px var(--deep);
}

.command { flex: none; height: 32px; display: flex; background: var(--cream); border-bottom: 1px solid #000; }
.cmd {
  width: 32px;
  border-right: 1px solid #000;
  background: var(--cream);
  display: grid;
  place-items: center;
  box-shadow: inset 0 0 0 2px #fffff0, inset 0 0 0 5px #c0c09a;
}
.cmd svg { width: 21px; height: 19px; fill: none; stroke: #000; background: var(--cream); }
.cmd.on { box-shadow: inset 0 0 0 3px var(--teal), inset -2px -2px 0 4px #b8a888; }
.bang { width: 32px; border-left: 1px solid #000; margin-left: 2px; }
.bang svg { width: 17px; }
.xy { width: 48px; padding-left: 2px; line-height: 32px; white-space: pre; }
.command input {
  width: 171px;
  height: 29px;
  margin-top: 2px;
  background: repeating-linear-gradient(#000 0 1px, transparent 1px 3px) 4px 2px / 1px 16px no-repeat var(--cream);
  border: 2px solid #8f8f70;
  border-right-color: #c8c8a0;
  border-bottom-color: #c8c8a0;
  padding: 0 4px;
  font: inherit;
}
.command p { flex: 1; margin: 0; padding-left: 4px; line-height: 32px; }
.unit { width: 80px; border-left: 2px solid #000; background: var(--teal); padding: 2px 4px 3px 6px; }
.unit button { width: 100%; height: 26px; border: 2px solid #a5e8d8; border-right-color: var(--deep); border-bottom-color: var(--deep); display: flex; justify-content: space-between; align-items: center; padding: 2px 6px 0 4px; }
.unit i { width: 12px; height: 7px; border: 2px solid #a5e8d8; border-right-color: var(--deep); border-bottom-color: var(--deep); }

.status {
  flex: none;
  height: 39px;
  position: relative;
  background: linear-gradient(#69918f 2px, #000 2px, #000 3px, #d2ffff 3px, #d2ffff 8px, #b3ffff 8px, #b3ffff 25px, #69918f 25px, #69918f 27px, #b3ffff 27px, #b3ffff 29px, #000 29px, #000 30px, #fff 30px, #fff 32px, var(--cream) 32px);
  border-left: 2px solid #69918f;
}
.status output { display: block; text-align: center; padding-top: 10px; }
.gauge { position: absolute; left: 1px; bottom: 11px; width: 7px; height: 66px; border-radius: 4px; border: 1px solid #aaa8; background: linear-gradient(#7776 45px, #2bb352 45px, #7ff07f); }
.ime { position: absolute; right: 0; bottom: 0; width: 177px; height: 26px; display: flex; align-items: center; gap: 8px; background: linear-gradient(90deg, transparent 28px, #fff 28px); border-bottom: 1px solid #d8d8e8; }
.ime svg { width: 16px; height: 16px; }
.ime .sogou { width: 30px; height: 30px; margin: -4px -5px 0 0; }
.ime b { width: 22px; height: 25px; text-align: center; color: #f06a30; font: bold 16px/24px "Noto Sans CJK SC", sans-serif; background: linear-gradient(135deg, #ffeedd, #f0e0ff, #ffe8f4); margin-right: -3px; }

.taskbar { flex: none; height: 40px; display: flex; align-items: center; background: #1b292e; color: #fff; font: 12px/16px var(--ui); }
.sys { width: 48px; height: 40px; display: grid; place-items: center; }
.sys svg { width: 18px; height: 18px; }
.search svg { width: 20px; height: 20px; }
.search { width: 50px; }
.folder { width: 56px; padding-left: 6px; }
.folder svg { width: 22px; }
.task { width: 161px; height: 40px; display: flex; align-items: center; gap: 4px; padding-left: 10px; white-space: nowrap; background: linear-gradient(#76b0e8, #76b0e8) 4px 100% / 152px 2px no-repeat; }
.task svg { width: 24px; height: 24px; flex: none; }
.task svg.app { width: 22px; height: 22px; margin-right: 2px; }
.task.active { margin-left: -2px; width: 160px; background: linear-gradient(#4a555a 38px, #76b0e8 38px); }
.tray { margin-left: auto; height: 40px; display: flex; align-items: center; gap: 8px; padding-right: 15px; border-right: 3px solid #1b292e; }
.tray svg { width: 16px; height: 16px; }
.tray span { width: 16px; font-size: 14px; }
.tray .s { margin: 0 5px 0 2px; }
.tray time { width: 70px; text-align: center; line-height: 20px; }
.tray .play { margin-left: 6px; }
.tray .note { width: 24px; height: 24px; margin-left: 15px; }
```
